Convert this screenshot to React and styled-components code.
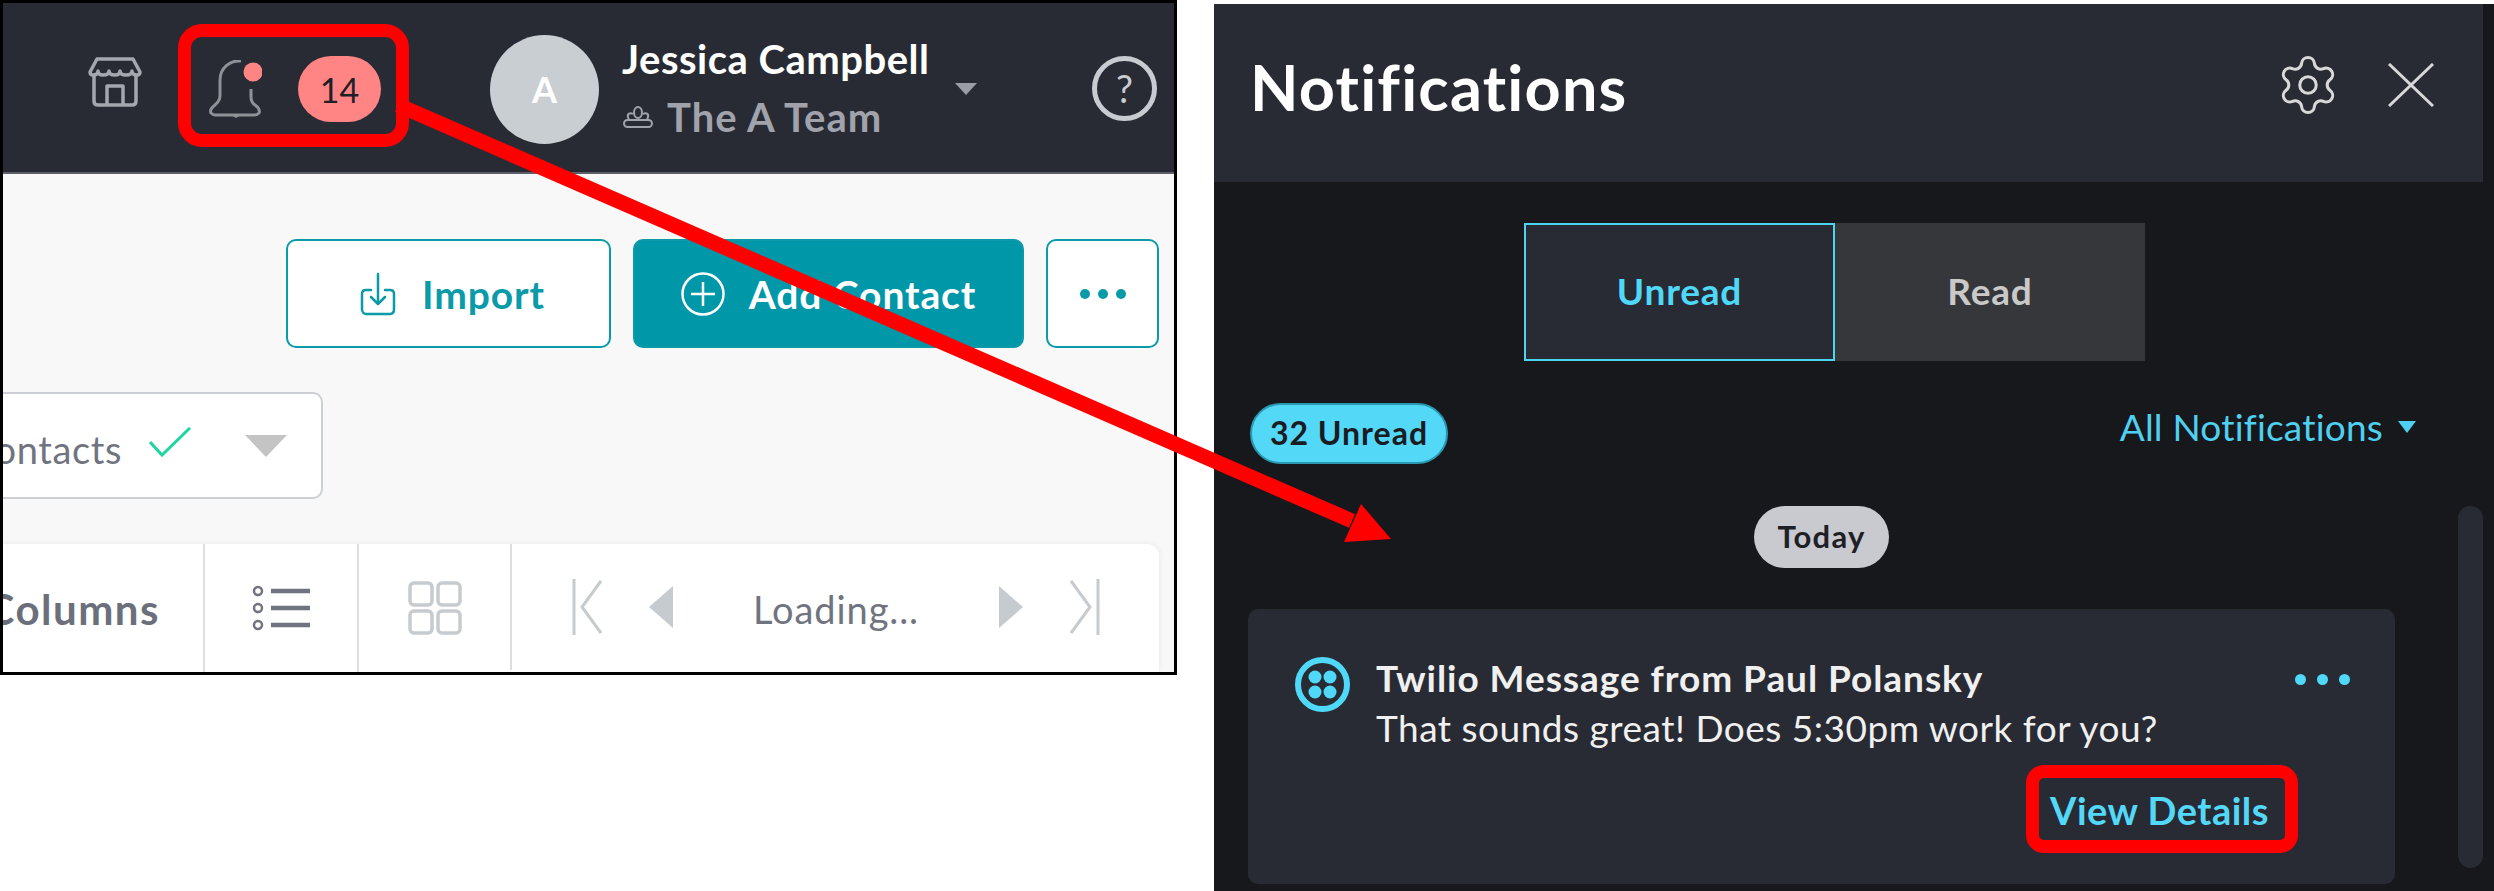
import React from "react";
import styled, { createGlobalStyle } from "styled-components";
import { Settings } from "lucide-react";

const GlobalStyle = createGlobalStyle`
  html, body { margin: 0; padding: 0; background: #fff; overflow: hidden; }
  body { font-family: Lato, "Open Sans", sans-serif; }
  * { box-sizing: border-box; }
`;

const Page = styled.div`
  position: relative;
  width: 2494px;
  height: 891px;
  display: flex;
  align-items: flex-start;
`;

// left crop of the app
const AppFrame = styled.div`
  width: 1177px;
  height: 675px;
  border: 3px solid #000;
  background: #f8f8f8;
  display: flex;
  flex-direction: column;
  overflow: hidden;
  flex: none;
`;

const TopBar = styled.header`
  height: 171px;
  flex: none;
  background: #282b34;
  border-bottom: 2px solid #5c5f68;
  display: flex;
  align-items: center;
  padding-left: 85px;
`;

const StoreButton = styled.div`
  width: 54px;
  height: 50px;
  margin-top: -11px;
  margin-right: 66px;
`;

const BellWrap = styled.div`
  width: 54px;
  height: 58px;
  margin-top: 3px;
  margin-right: 36px;
`;

const CountBadge = styled.div`
  width: 83px;
  height: 66px;
  border-radius: 33px;
  background: #ff8585;
  color: #1e2026;
  font-size: 34px;
  display: flex;
  align-items: center;
  justify-content: center;
  margin-right: 109px;
  margin-top: 3px;
`;

const Avatar = styled.div`
  width: 109px;
  height: 109px;
  border-radius: 50%;
  background: #c9ced2;
  color: #fff;
  font-size: 36px;
  font-weight: 700;
  display: flex;
  align-items: center;
  justify-content: center;
  margin-right: 21px;
  margin-top: 3px;
`;

const UserText = styled.div`
  width: 307px;
  margin-right: 28px;
  display: flex;
  flex-direction: column;
  gap: 12px;
  margin-top: 1px;
`;

const UserName = styled.div`
  color: #fff;
  font-size: 40px;
  line-height: 46px;
  font-weight: 700;
  letter-spacing: 0.5px;
  padding-left: 2px;
  white-space: nowrap;
`;

const TeamLine = styled.div`
  display: flex;
  align-items: center;
  gap: 14px;
  padding-left: 3px;
  color: #a0a3ab;
  font-size: 40px;
  line-height: 46px;
  font-weight: 700;
  letter-spacing: 1px;
  white-space: nowrap;
`;

const Caret = styled.div`
  width: 0;
  height: 0;
  border-left: ${p => p.$w / 2}px solid transparent;
  border-right: ${p => p.$w / 2}px solid transparent;
  border-top: ${p => p.$h}px solid ${p => p.$color};
  flex: none;
`;

const UserCaret = styled(Caret)`
  margin-right: 115px;
  margin-top: 2px;
`;

const HelpCircle = styled.div`
  width: 65px;
  height: 65px;
  border: 5px solid #c8cbd0;
  border-radius: 50%;
  color: #c8cbd0;
  font-size: 38px;
  display: flex;
  align-items: center;
  justify-content: center;
  margin-top: 1px;
`;

const ActionRow = styled.div`
  display: flex;
  justify-content: flex-end;
  gap: 22px;
  height: 109px;
  margin-top: 65px;
  padding-right: 15px;
  flex: none;
`;

const OutlineButton = styled.div`
  width: ${p => p.$w}px;
  border: 2px solid #0a9aa8;
  border-radius: 10px;
  background: ${p => (p.$filled ? "#0098a8" : "#fff")};
  color: ${p => (p.$filled ? "#fff" : "#0a9aa8")};
  font-size: 39px;
  font-weight: 700;
  letter-spacing: 0.9px;
  display: flex;
  align-items: center;
  justify-content: center;
  gap: ${p => (p.$filled ? 24 : 26)}px;
  padding-left: ${p => p.$shift || 0}px;
`;

const Dots = styled.div`
  display: flex;
  gap: ${p => p.$gap}px;
  flex: none;
`;

const Dot = styled.span`
  width: ${p => p.$size}px;
  height: ${p => p.$size}px;
  border-radius: 50%;
  background: ${p => p.$color};
`;

const FilterSelect = styled.div`
  width: 380px;
  height: 107px;
  margin-top: 44px;
  margin-left: -60px;
  border: 2px solid #ccd0d5;
  border-radius: 10px;
  background: #fff;
  display: flex;
  align-items: center;
  justify-content: flex-end;
  padding-right: 34px;
  flex: none;
`;

const FilterLabel = styled.span`
  color: #6f7480;
  font-size: 38px;
  letter-spacing: 0.6px;
  margin-right: 27px;
  margin-top: 6px;
`;

const FilterCheck = styled.svg`
  width: 42px;
  height: 30px;
  margin-right: 54px;
  margin-top: -8px;
`;

const TableBar = styled.div`
  flex: 1;
  margin-top: 45px;
  margin-right: 15px;
  background: #fff;
  border-radius: 0 12px 0 0;
  box-shadow: 0 0 6px rgba(0, 0, 0, 0.08);
  display: flex;
`;

const BarCell = styled.div`
  width: ${p => p.$w}px;
  flex: none;
  display: flex;
  align-items: center;
  justify-content: ${p => p.$align || "center"};
  overflow: hidden;
  & + & { border-left: 2px solid #dedede; }
`;

const ColumnsLabel = styled.span`
  color: #6b6f7b;
  font-size: 42px;
  font-weight: 700;
  letter-spacing: 1.5px;
  margin-right: 43px;
  margin-top: 1px;
  white-space: nowrap;
`;

const Pager = styled.div`
  flex: 1;
  border-left: 2px solid #dedede;
  display: flex;
  align-items: center;
  padding-left: 60px;
  margin-bottom: 2px;
`;

const PagerGap = styled.div`
  width: 47px;
  flex: none;
`;

const LoadingText = styled.span`
  color: #6f7480;
  font-size: 38px;
  letter-spacing: 0.9px;
  width: 326px;
  text-align: center;
  padding-top: 4px;
`;

// right side panel
const NoticePanel = styled.aside`
  width: 1280px;
  height: 887px;
  margin-left: 37px;
  margin-top: 4px;
  background: #17181c;
  flex: none;
  display: flex;
  flex-direction: column;
  overflow: hidden;
`;

const NoticeHead = styled.div`
  width: 1269px;
  height: 178px;
  flex: none;
  background: #282b34;
  display: flex;
  align-items: flex-start;
  padding: 47px 49px 0 36px;
`;

const NoticeTitle = styled.h1`
  flex: 1;
  margin: 0;
  color: #fff;
  font-size: 63px;
  line-height: 72px;
  font-weight: 700;
  letter-spacing: 1.2px;
`;

const HeadIcons = styled.div`
  display: flex;
  align-items: center;
  gap: 47px;
  color: #d8d8d8;
  margin-top: 1px;
`;

const Tabs = styled.div`
  display: flex;
  margin: 41px 0 0 310px;
  height: 138px;
  flex: none;
`;

const Tab = styled.div`
  width: ${p => (p.$active ? 311 : 310)}px;
  background: ${p => (p.$active ? "#282b34" : "#36373b")};
  border: ${p => (p.$active ? "2px solid #4fd4f0" : "none")};
  color: ${p => (p.$active ? "#4fd8f7" : "#c9c9c9")};
  font-size: 37px;
  font-weight: 700;
  letter-spacing: 0.8px;
  display: flex;
  align-items: center;
  justify-content: center;
  padding-bottom: 3px;
`;

const CountRow = styled.div`
  display: flex;
  justify-content: space-between;
  align-items: center;
  height: 61px;
  margin-top: 42px;
  padding: 0 78px 0 36px;
  flex: none;
`;

const UnreadPill = styled.div`
  width: 198px;
  height: 61px;
  border-radius: 31px;
  background: #54d8f8;
  border: 2px solid #2a98b0;
  color: #1a1c22;
  font-size: 32px;
  font-weight: 700;
  letter-spacing: 1px;
  display: flex;
  align-items: center;
  justify-content: center;
  padding-bottom: 2px;
`;

const FilterLink = styled.div`
  display: flex;
  align-items: center;
  gap: 15px;
  color: #4fd0f0;
  font-size: 37px;
  letter-spacing: 0.2px;
  margin-top: -14px;
`;

const DateChip = styled.div`
  width: 135px;
  height: 62px;
  margin: 42px 0 0 540px;
  border-radius: 31px;
  background: #c9cacf;
  color: #1e2026;
  font-size: 31px;
  font-weight: 700;
  letter-spacing: 1.2px;
  display: flex;
  align-items: center;
  justify-content: center;
  padding-bottom: 3px;
  flex: none;
`;

const Card = styled.div`
  width: 1147px;
  height: 275px;
  margin: 41px 0 0 34px;
  background: #282b34;
  border-radius: 10px;
  padding: 48px 45px 0 47px;
  display: flex;
  gap: 26px;
  flex: none;
`;

const CardBody = styled.div`
  flex: 1;
  display: flex;
  flex-direction: column;
`;

const CardTitleRow = styled.div`
  display: flex;
  justify-content: space-between;
  align-items: center;
  height: 46px;
  margin-top: -3px;
`;

const CardTitle = styled.div`
  color: #f0f0f0;
  font-size: 37px;
  font-weight: 700;
  letter-spacing: 0.95px;
  white-space: nowrap;
`;

const CardDots = styled(Dots)`
  margin-top: 5px;
`;

const CardText = styled.div`
  color: #f0f0f0;
  font-size: 37px;
  line-height: 46px;
  letter-spacing: 0.5px;
  margin-top: 5px;
  white-space: nowrap;
`;

const CardLink = styled.div`
  align-self: flex-end;
  margin: 36px 81px 0 0;
  color: #54d8f8;
  font-size: 38px;
  line-height: 46px;
  font-weight: 700;
  letter-spacing: 0.5px;
`;

const ScrollThumb = styled.div`
  position: absolute;
  left: 2458px;
  top: 506px;
  width: 25px;
  height: 362px;
  border-radius: 13px;
  background: #282b34;
`;

// annotations drawn on top of the screenshot
const RedBox = styled.div`
  position: absolute;
  left: ${p => p.$x}px;
  top: ${p => p.$y}px;
  width: ${p => p.$w}px;
  height: ${p => p.$h}px;
  border: 13px solid #f00;
  border-radius: ${p => p.$r}px;
`;

const ArrowLayer = styled.svg`
  position: absolute;
  left: 0;
  top: 0;
  pointer-events: none;
`;

const StoreIcon = () => (
  <svg width="54" height="50" viewBox="0 0 54 50" fill="none" stroke="#a4a7ae" strokeWidth="3.5" strokeLinejoin="round">
    <path d="M9 2h36l7 13c0 2-1 3-3 3-3 0-5-1-5-4 0 3-3 4-6 4s-6-1-6-4c0 3-2 4-5 4s-6-1-6-4c0 3-3 4-6 4s-5-1-5-4c0 3-2 4-5 4-2 0-3-1-3-3z" />
    <path d="M6 19v25c0 3 2 4 4 4h34c2 0 4-1 4-4V19" />
    <path d="M19 48V29h16v19" />
  </svg>
);

const BellIcon = () => (
  <svg width="54" height="58" viewBox="0 0 54 58" fill="none">
    <path d="M33 1C22 0 12 8 12 20v15c0 5-2 7-5 10-4 3-5 6-4 8 1 1 2 2 4 2h40c2 0 3-1 4-2 1-3-1-6-4-8-3-2-4-4-4-8V29" stroke="#8f9196" strokeWidth="3" />
    <path d="M23 55l5 3 5-3z" fill="#8f9196" />
    <circle cx="45" cy="12" r="9.5" fill="#ff8585" />
  </svg>
);

const TeamIcon = () => (
  <svg width="30" height="22" viewBox="0 0 30 22" fill="none" stroke="#a0a3ab" strokeWidth="2">
    <ellipse cx="15" cy="6.5" rx="4" ry="5.5" />
    <path d="M10 8C7 6 4 8 5 11l1 3M20 8c3-2 6 0 5 3l-1 3" />
    <rect x="1" y="14" width="28" height="7" rx="3.5" />
  </svg>
);

const ImportIcon = () => (
  <svg width="36" height="44" viewBox="0 0 36 44" fill="none" stroke="#0a9aa8" strokeWidth="2.5" strokeLinecap="round" strokeLinejoin="round">
    <path d="M11 18H6c-3 0-4 2-4 4v15c0 3 2 5 4 5h24c3 0 4-2 4-5V22c0-2-1-4-4-4h-5" />
    <path d="M18 2v30M11 25l7 7 7-7" />
  </svg>
);

const PlusCircleIcon = () => (
  <svg width="44" height="44" viewBox="0 0 44 44" fill="none" stroke="#fff" strokeWidth="2.5">
    <circle cx="22" cy="22" r="20.5" />
    <path d="M22 10v24M10 22h24" />
  </svg>
);

const ListIcon = () => (
  <svg width="58" height="46" viewBox="0 0 58 46" fill="none">
    <g stroke="#6f7480" strokeWidth="2.5">
      <circle cx="6" cy="6" r="4" />
      <circle cx="6" cy="23" r="4" />
      <circle cx="6" cy="40" r="4" />
    </g>
    <path d="M19 6h39M19 23h39M19 40h39" stroke="#6f7480" strokeWidth="4.5" />
  </svg>
);

const GridIcon = () => (
  <svg width="54" height="54" viewBox="0 0 54 54" fill="none" stroke="#c6cbd0" strokeWidth="3.5">
    <rect x="2" y="2" width="22" height="22" rx="4" />
    <rect x="30" y="2" width="22" height="22" rx="4" />
    <rect x="2" y="30" width="22" height="22" rx="4" />
    <rect x="30" y="30" width="22" height="22" rx="4" />
  </svg>
);

const FirstPageIcon = () => (
  <svg width="30" height="56" viewBox="0 0 30 56" fill="none" stroke="#c6cbd0" strokeWidth="3">
    <path d="M2 0v56M29 2L10 28l19 26" />
  </svg>
);

const LastPageIcon = () => (
  <svg width="30" height="56" viewBox="0 0 30 56" fill="none" stroke="#c6cbd0" strokeWidth="3">
    <path d="M28 0v56M1 2l19 26L1 54" />
  </svg>
);

const PrevIcon = () => (
  <svg width="24" height="42" viewBox="0 0 24 42">
    <path d="M24 0v42L0 21z" fill="#c6cbd0" />
  </svg>
);

const NextIcon = () => (
  <svg width="24" height="42" viewBox="0 0 24 42">
    <path d="M0 0v42l24-21z" fill="#c6cbd0" />
  </svg>
);

const CloseIcon = () => (
  <svg width="46" height="44" viewBox="0 0 46 44" fill="none" stroke="#d8d8d8" strokeWidth="3">
    <path d="M1 1l44 42M45 1L1 43" />
  </svg>
);

const TwilioIcon = () => (
  <svg width="55" height="55" viewBox="0 0 55 55" style={{ flex: "none" }}>
    <circle cx="27.5" cy="27.5" r="24.5" fill="none" stroke="#4fd8f7" strokeWidth="6" />
    <circle cx="20" cy="20" r="6.5" fill="#4fd8f7" />
    <circle cx="35" cy="20" r="6.5" fill="#4fd8f7" />
    <circle cx="20" cy="35" r="6.5" fill="#4fd8f7" />
    <circle cx="35" cy="35" r="6.5" fill="#4fd8f7" />
  </svg>
);

function App() {
  return (
    <Page>
      <GlobalStyle />
      <AppFrame>
        <TopBar>
          <StoreButton>
            <StoreIcon />
          </StoreButton>
          <BellWrap>
            <BellIcon />
          </BellWrap>
          <CountBadge>14</CountBadge>
          <Avatar>A</Avatar>
          <UserText>
            <UserName>Jessica Campbell</UserName>
            <TeamLine>
              <TeamIcon />
              The A Team
            </TeamLine>
          </UserText>
          <UserCaret $w={23} $h={12} $color="#9a9da5" />
          <HelpCircle>?</HelpCircle>
        </TopBar>

        <ActionRow>
          <OutlineButton $w={325} $shift={8}>
            <ImportIcon />
            Import
          </OutlineButton>
          <OutlineButton $w={391} $filled>
            <PlusCircleIcon />
            Add Contact
          </OutlineButton>
          <OutlineButton $w={113}>
            <Dots $gap={8}>
              <Dot $size={10} $color="#0a9aa8" />
              <Dot $size={10} $color="#0a9aa8" />
              <Dot $size={10} $color="#0a9aa8" />
            </Dots>
          </OutlineButton>
        </ActionRow>

        <FilterSelect>
          <FilterLabel>Contacts</FilterLabel>
          <FilterCheck viewBox="0 0 42 30" fill="none" stroke="#1ed6a0" strokeWidth="3">
            <path d="M1 15l12 13L41 1" />
          </FilterCheck>
          <Caret $w={42} $h={22} $color="#c4c4c4" />
        </FilterSelect>

        <TableBar>
          <BarCell $w={200} $align="flex-end">
            <ColumnsLabel>Columns</ColumnsLabel>
          </BarCell>
          <BarCell $w={154}>
            <ListIcon />
          </BarCell>
          <BarCell $w={153}>
            <GridIcon />
          </BarCell>
          <Pager>
            <FirstPageIcon />
            <PagerGap />
            <PrevIcon />
            <LoadingText>Loading...</LoadingText>
            <NextIcon />
            <PagerGap />
            <LastPageIcon />
          </Pager>
        </TableBar>
      </AppFrame>

      <NoticePanel>
        <NoticeHead>
          <NoticeTitle>Notifications</NoticeTitle>
          <HeadIcons>
            <Settings size={66} strokeWidth={1.1} />
            <CloseIcon />
          </HeadIcons>
        </NoticeHead>

        <Tabs>
          <Tab $active>Unread</Tab>
          <Tab>Read</Tab>
        </Tabs>

        <CountRow>
          <UnreadPill>32 Unread</UnreadPill>
          <FilterLink>
            All Notifications
            <Caret $w={19} $h={12} $color="#4fd0f0" />
          </FilterLink>
        </CountRow>

        <DateChip>Today</DateChip>

        <Card>
          <TwilioIcon />
          <CardBody>
            <CardTitleRow>
              <CardTitle>Twilio Message from Paul Polansky</CardTitle>
              <CardDots $gap={11}>
                <Dot $size={11} $color="#4fd8f7" />
                <Dot $size={11} $color="#4fd8f7" />
                <Dot $size={11} $color="#4fd8f7" />
              </CardDots>
            </CardTitleRow>
            <CardText>That sounds great! Does 5:30pm work for you?</CardText>
            <CardLink>View Details</CardLink>
          </CardBody>
        </Card>
      </NoticePanel>

      <ScrollThumb />
      <RedBox $x={178} $y={24} $w={231} $h={123} $r={24} />
      <RedBox $x={2026} $y={765} $w={272} $h={88} $r={18} />
      <ArrowLayer width="2494" height="891" viewBox="0 0 2494 891">
        <path d="M398 105L1352 521" stroke="#f00" strokeWidth="15" fill="none" />
        <path d="M1391 539L1361 504L1344 542z" fill="#f00" />
      </ArrowLayer>
    </Page>
  );
}

export default App;
